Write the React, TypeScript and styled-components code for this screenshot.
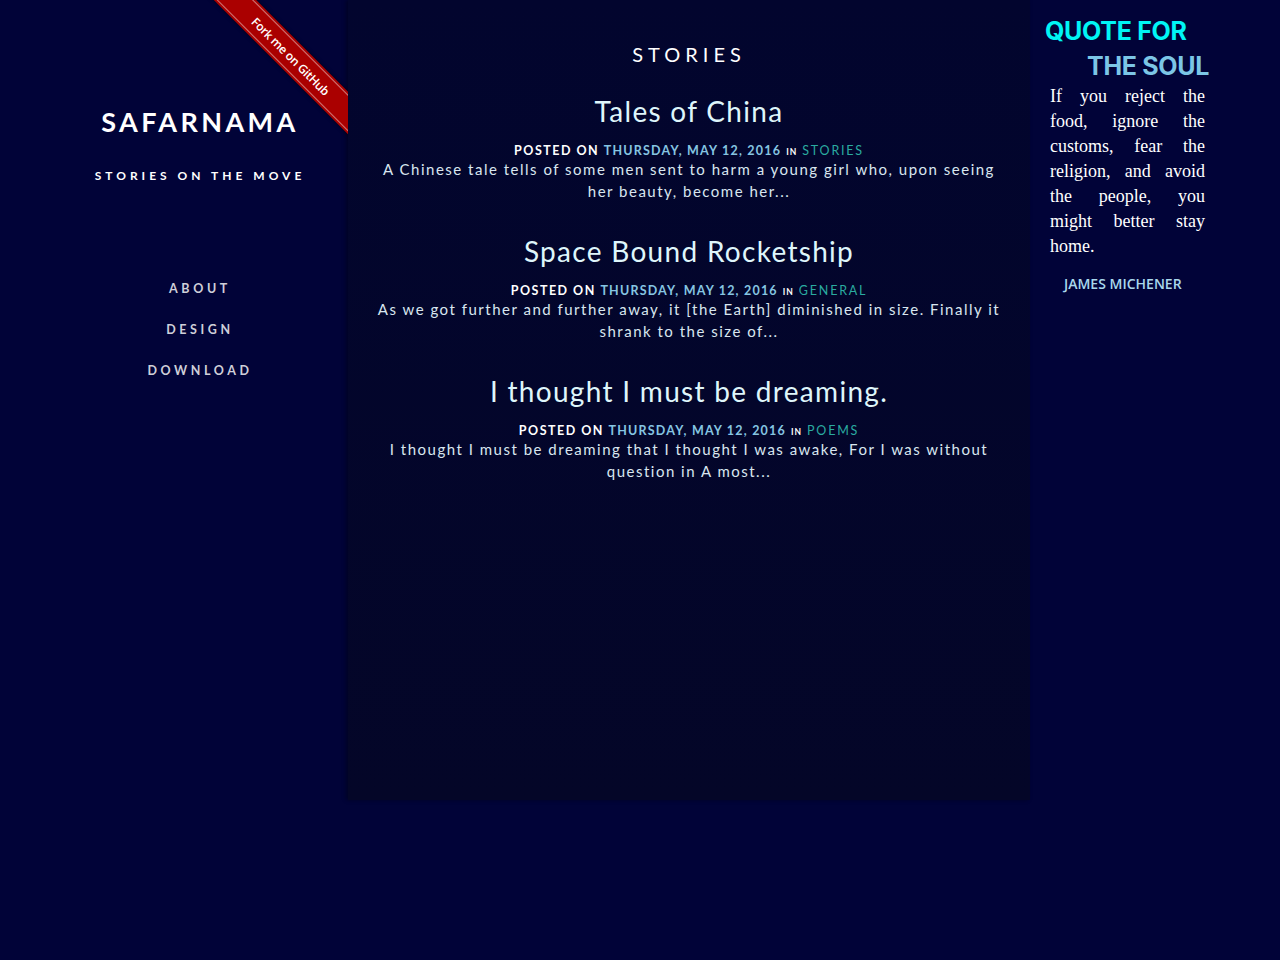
import React from "react";
import styled, { createGlobalStyle } from "styled-components";

const Global = createGlobalStyle`
  html, body { margin: 0; padding: 0; background: #010338; }
  body { font-family: Lato, "Open Sans", sans-serif; }
  a { text-decoration: none; }
`;

const Page = styled.div`
  display: grid;
  grid-template-columns: 348px 682px 250px;
  width: 1280px;
  min-height: 960px;
  background: #010338;
  align-items: start;
`;

const Sidebar = styled.aside`
  position: relative;
  height: 800px;
  overflow: hidden;
  display: flex;
  flex-direction: column;
  align-items: center;
  padding-left: 52px;
  box-sizing: border-box;
`;

const SiteTitle = styled.h1`
  margin: 104px 0 0;
  font-family: Lato, sans-serif;
  font-weight: 700;
  font-size: 27px;
  letter-spacing: 3.4px;
  color: #ffffff;
  line-height: 36px;
`;

const Tagline = styled.p`
  margin: 28px 0 0;
  font-family: Lato, sans-serif;
  font-weight: 700;
  font-size: 12px;
  letter-spacing: 4px;
  color: #ffffff;
  line-height: 16px;
`;

const Nav = styled.nav`
  margin-top: 97px;
  display: flex;
  flex-direction: column;
  align-items: center;
  gap: 25px;
`;

const NavLink = styled.a`
  font-family: Lato, sans-serif;
  font-weight: 700;
  font-size: 12.5px;
  letter-spacing: 3.6px;
  color: #cfcfd8;
  line-height: 16px;
`;

const RibbonClip = styled.div`
  position: absolute;
  top: 0;
  right: 0;
  width: 150px;
  height: 150px;
  overflow: hidden;
`;

const Ribbon = styled.a`
  position: absolute;
  left: -23px;
  top: 41px;
  width: 232px;
  height: 30px;
  box-sizing: border-box;
  padding: 2px 0;
  background: #aa0000;
  transform: rotate(45deg);
  display: flex;
  box-shadow: 0 0 4px rgba(0, 0, 0, 0.6);
`;

const RibbonInner = styled.span`
  flex: 1;
  display: flex;
  align-items: center;
  justify-content: center;
  border-top: 1px solid rgba(255, 255, 255, 0.45);
  border-bottom: 1px solid rgba(255, 255, 255, 0.45);
  font-family: "Open Sans", sans-serif;
  font-weight: 600;
  font-size: 12px;
  color: #ffffff;
  letter-spacing: -0.3px;
`;

const Main = styled.main`
  height: 800px;
  background: linear-gradient(180deg, #02052e 0%, #040628 100%);
  box-shadow: -2px 0 4px rgba(0, 0, 0, 0.35);
  padding: 39px 28px 0;
  box-sizing: border-box;
  text-align: center;
`;

const SectionTitle = styled.h2`
  margin: 0;
  font-family: Lato, sans-serif;
  font-weight: 400;
  font-size: 20px;
  letter-spacing: 5px;
  color: #ffffff;
  line-height: 30px;
`;

const Post = styled.article<{ first?: boolean }>`
  margin-top: ${(p) => (p.first ? "23px" : "30px")};
`;

const PostTitle = styled.h3`
  margin: 0;
  font-family: Lato, sans-serif;
  font-weight: 400;
  font-size: 28px;
  letter-spacing: 1.3px;
  color: #dff6fb;
  line-height: 38px;
`;

const Meta = styled.div`
  margin-top: 14px;
  font-family: Lato, sans-serif;
  font-size: 12.5px;
  letter-spacing: 1.5px;
  line-height: 14px;
  color: #ffffff;
  font-weight: 700;
`;

const MetaLink = styled.a<{ tone: "date" | "cat" }>`
  font-weight: ${(p) => (p.tone === "date" ? 700 : 400)};
  color: ${(p) => (p.tone === "date" ? "#86c5e2" : "#2aaba0")};
  letter-spacing: ${(p) => (p.tone === "date" ? "1.2px" : "1.8px")};
`;

const MetaIn = styled.span`
  font-size: 8.5px;
  letter-spacing: 1px;
  margin: 0 5px;
`;

const Excerpt = styled.p`
  margin: -1px 0 0;
  font-family: Lato, sans-serif;
  font-size: 15px;
  letter-spacing: 1.5px;
  line-height: 22px;
  color: #d9e6f0;
  font-weight: 400;
`;

const Aside = styled.aside`
  padding: 14px 0 0 15px;
`;

const QuoteHeading = styled.h2`
  margin: 0;
  font-family: Inter, Lato, sans-serif;
  font-weight: 700;
  font-size: 25px;
  line-height: 35px;
  letter-spacing: -0.3px;
`;

const HeadLine = styled.span<{ indent?: boolean; tone: string }>`
  display: block;
  color: ${(p) => p.tone};
  padding-left: ${(p) => (p.indent ? "42px" : "0")};
`;

const QuoteText = styled.p`
  margin: 0;
  width: 155px;
  padding-left: 5px;
  font-family: "Liberation Serif", "Times New Roman", serif;
  font-size: 18px;
  line-height: 25px;
  text-align: justify;
  color: #ffffff;
`;

const Author = styled.p`
  margin: 15px 0 0 19px;
  font-family: "Open Sans", sans-serif;
  font-weight: 600;
  font-size: 14px;
  letter-spacing: 0;
  color: #a9d8ec;
`;

const posts = [
  {
    title: "Tales of China",
    cat: "STORIES",
    excerpt:
      "A Chinese tale tells of some men sent to harm a young girl who, upon seeing her beauty, become her...",
  },
  {
    title: "Space Bound Rocketship",
    cat: "GENERAL",
    excerpt:
      "As we got further and further away, it [the Earth] diminished in size. Finally it shrank to the size of...",
  },
  {
    title: "I thought I must be dreaming.",
    cat: "POEMS",
    excerpt:
      "I thought I must be dreaming that I thought I was awake, For I was without question in A most...",
  },
];

export default function App() {
  return (
    <>
      <Global />
      <Page>
        <Sidebar>
          <SiteTitle>SAFARNAMA</SiteTitle>
          <Tagline>STORIES ON THE MOVE</Tagline>
          <Nav>
            <NavLink href="#">ABOUT</NavLink>
            <NavLink href="#">DESIGN</NavLink>
            <NavLink href="#">DOWNLOAD</NavLink>
          </Nav>
          <RibbonClip>
            <Ribbon href="#">
              <RibbonInner>Fork me on GitHub</RibbonInner>
            </Ribbon>
          </RibbonClip>
        </Sidebar>
        <Main>
          <SectionTitle>STORIES</SectionTitle>
          {posts.map((p, i) => (
            <Post key={p.title} first={i === 0}>
              <PostTitle>{p.title}</PostTitle>
              <Meta>
                POSTED ON <MetaLink tone="date" href="#">THURSDAY, MAY 12, 2016</MetaLink>
                <MetaIn>IN</MetaIn>
                <MetaLink tone="cat" href="#">{p.cat}</MetaLink>
              </Meta>
              <Excerpt>{p.excerpt}</Excerpt>
            </Post>
          ))}
        </Main>
        <Aside>
          <QuoteHeading>
            <HeadLine tone="#00f5f5">QUOTE FOR</HeadLine>
            <HeadLine tone="#7cc6e6" indent>
              THE SOUL
            </HeadLine>
          </QuoteHeading>
          <QuoteText>
            If you reject the food, ignore the customs, fear the religion, and avoid the people, you
            might better stay home.
          </QuoteText>
          <Author>JAMES MICHENER</Author>
        </Aside>
      </Page>
    </>
  );
}
